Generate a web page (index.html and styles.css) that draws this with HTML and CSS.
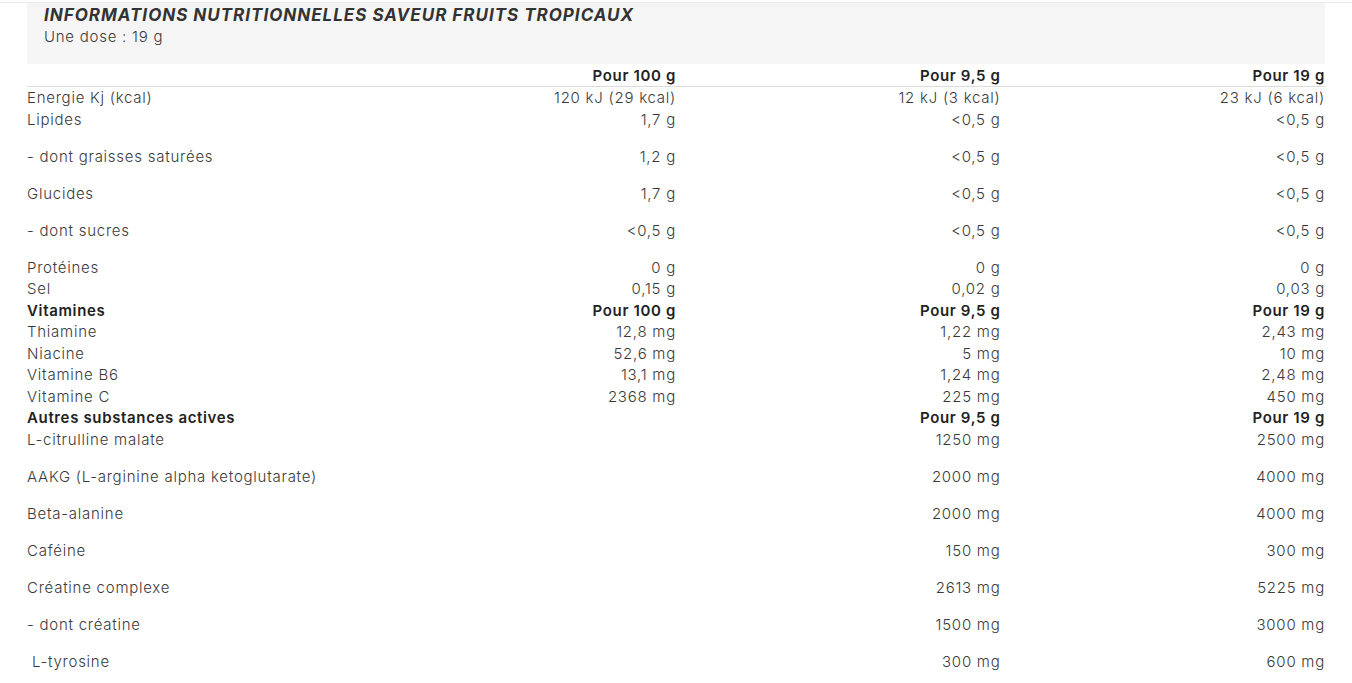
FILE: index.html
```html
<!DOCTYPE html>
<html lang="fr">
<head>
<meta charset="utf-8">
<title>Informations nutritionnelles</title>
<link rel="stylesheet" href="styles.css">
</head>
<body>
<div class="page">
  <div class="panel">
    <div class="intro">
      <h2 class="title">INFORMATIONS NUTRITIONNELLES SAVEUR FRUITS TROPICAUX</h2>
      <p class="dose">Une dose : 19 g</p>
    </div>
    <table class="nutri">
      <colgroup><col class="c"><col class="c"><col class="c"><col class="c"></colgroup>
      <thead>
        <tr class="head"><th></th><th>Pour 100 g</th><th>Pour 9,5 g</th><th>Pour 19 g</th></tr>
      </thead>
      <tbody>
        <tr><td>Energie Kj (kcal)</td><td>120 kJ (29 kcal)</td><td>12 kJ (3 kcal)</td><td>23 kJ (6 kcal)</td></tr>
        <tr class="tall"><td>Lipides</td><td>1,7 g</td><td>&lt;0,5 g</td><td>&lt;0,5 g</td></tr>
        <tr class="tall"><td>- dont graisses saturées</td><td>1,2 g</td><td>&lt;0,5 g</td><td>&lt;0,5 g</td></tr>
        <tr class="tall"><td>Glucides</td><td>1,7 g</td><td>&lt;0,5 g</td><td>&lt;0,5 g</td></tr>
        <tr class="tall"><td>- dont sucres</td><td>&lt;0,5 g</td><td>&lt;0,5 g</td><td>&lt;0,5 g</td></tr>
        <tr><td>Protéines</td><td>0 g</td><td>0 g</td><td>0 g</td></tr>
        <tr><td>Sel</td><td>0,15 g</td><td>0,02 g</td><td>0,03 g</td></tr>
        <tr class="sub"><th>Vitamines</th><th>Pour 100 g</th><th>Pour 9,5 g</th><th>Pour 19 g</th></tr>
        <tr><td>Thiamine</td><td>12,8 mg</td><td>1,22 mg</td><td>2,43 mg</td></tr>
        <tr><td>Niacine</td><td>52,6 mg</td><td>5 mg</td><td>10 mg</td></tr>
        <tr><td>Vitamine B6</td><td>13,1 mg</td><td>1,24 mg</td><td>2,48 mg</td></tr>
        <tr><td>Vitamine C</td><td>2368 mg</td><td>225 mg</td><td>450 mg</td></tr>
        <tr class="sub"><th>Autres substances actives</th><th></th><th>Pour 9,5 g</th><th>Pour 19 g</th></tr>
        <tr class="tall"><td>L-citrulline malate</td><td></td><td>1250 mg</td><td>2500 mg</td></tr>
        <tr class="tall"><td>AAKG (L-arginine alpha ketoglutarate)</td><td></td><td>2000 mg</td><td>4000 mg</td></tr>
        <tr class="tall"><td>Beta-alanine</td><td></td><td>2000 mg</td><td>4000 mg</td></tr>
        <tr class="tall"><td>Caféine</td><td></td><td>150 mg</td><td>300 mg</td></tr>
        <tr class="tall"><td>Créatine complexe</td><td></td><td>2613 mg</td><td>5225 mg</td></tr>
        <tr class="tall"><td>- dont créatine</td><td></td><td>1500 mg</td><td>3000 mg</td></tr>
        <tr class="tall"><td>&nbsp;L-tyrosine</td><td></td><td>300 mg</td><td>600 mg</td></tr>
      </tbody>
    </table>
  </div>
</div>
</body>
</html>
```
FILE: styles.css
```css
html, body {
  margin: 0;
  padding: 0;
  background: #fff;
}
body {
  font-family: "Inter", "Open Sans", sans-serif;
  font-weight: 300;
  font-size: 15px;
  letter-spacing: 0.75px;
  color: #3a3a3a;
}
.page {
  margin-top: 2px;
  border-top: 1px solid #ececec;
  padding: 0 27px;
}
.panel {
  width: 1298px;
}
.intro {
  background: #f5f5f5;
  padding: 1px 17px 16px;
}
.title {
  margin: 0;
  font-size: 17px;
  line-height: 22px;
  font-weight: 700;
  font-style: italic;
  letter-spacing: 1px;
  color: #333;
}
.dose {
  margin: 0;
  font-size: 15px;
  line-height: 22px;
  color: #3a3a3a;
}
.nutri {
  width: 1298px;
  border-collapse: collapse;
  table-layout: fixed;
}
.nutri col.c {
  width: 25%;
}
.nutri th,
.nutri td {
  padding: 0;
  line-height: 21.5px;
  vertical-align: top;
  text-align: right;
  white-space: nowrap;
}
.nutri th:first-child,
.nutri td:first-child {
  text-align: left;
}
.nutri th {
  font-weight: 600;
  color: #222;
  letter-spacing: 0.65px;
}
.head th {
  border-bottom: 1px solid #dcdcdc;
  padding-top: 0.5px;
}
.tall td {
  padding-bottom: 15.5px;
}
```
